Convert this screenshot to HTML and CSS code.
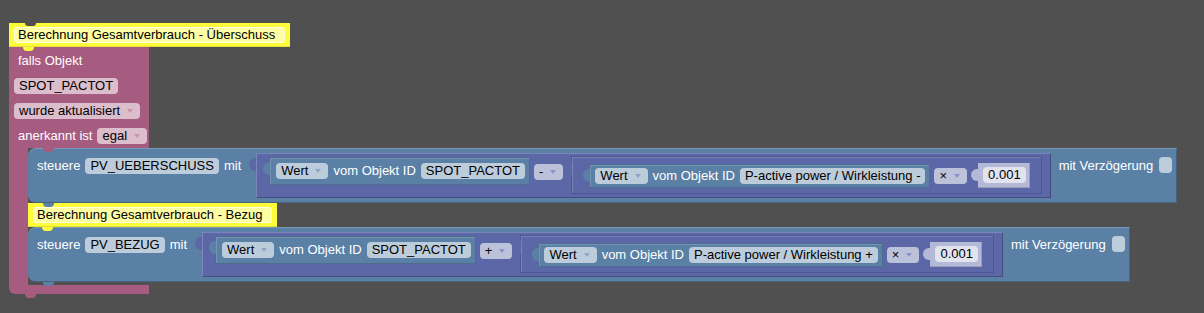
FILE: index.html
```html
<!DOCTYPE html>
<html lang="de">

<head>
    <meta charset="UTF-8">
    <meta name="viewport" content="width=device-width, initial-scale=1.0">
    <title>Skript</title>
    <link rel="stylesheet" href="styles.css">
</head>

<body>
    <div class="workspace">
        <div class="script">
            <div class="comment hat">
                <div class="comment-text">Berechnung Gesamtverbrauch - Überschuss</div>
            </div>

            <div class="event">
                <div class="event-head">
                    <div class="row"><span class="label indent">falls Objekt</span></div>
                    <div class="row"><span class="field">SPOT_PACTOT</span></div>
                    <div class="row"><span class="field dd">wurde aktualisiert<i class="caret"></i></span></div>
                    <div class="row">
                        <span class="label indent">anerkannt ist</span>
                        <span class="field dd">egal<i class="caret"></i></span>
                    </div>
                </div>

                <div class="event-do">
                    <div class="spine"></div>
                    <div class="statements">

                        <div class="control">
                            <span class="label">steuere</span>
                            <span class="field">PV_UEBERSCHUSS</span>
                            <span class="label">mit</span>
                            <div class="op">
                                <div class="getval">
                                    <span class="field dd">Wert<i class="caret"></i></span>
                                    <span class="label">vom Objekt ID</span>
                                    <span class="field">SPOT_PACTOT</span>
                                </div>
                                <span class="field dd sign">-<i class="caret"></i></span>
                                <div class="op inner">
                                    <div class="getval short">
                                        <span class="field dd">Wert<i class="caret"></i></span>
                                        <span class="label">vom Objekt ID</span>
                                        <span class="field">P-active power / Wirkleistung -</span>
                                    </div>
                                    <span class="field dd">×<i class="caret"></i></span>
                                    <div class="number"><span class="field">0.001</span></div>
                                </div>
                            </div>
                            <span class="label delay">mit Verzögerung</span>
                            <span class="check"></span>
                        </div>

                        <div class="comment">
                            <div class="comment-text">Berechnung Gesamtverbrauch - Bezug</div>
                        </div>

                        <div class="control">
                            <span class="label">steuere</span>
                            <span class="field">PV_BEZUG</span>
                            <span class="label">mit</span>
                            <div class="op">
                                <div class="getval">
                                    <span class="field dd">Wert<i class="caret"></i></span>
                                    <span class="label">vom Objekt ID</span>
                                    <span class="field">SPOT_PACTOT</span>
                                </div>
                                <span class="field dd sign">+<i class="caret"></i></span>
                                <div class="op inner">
                                    <div class="getval short">
                                        <span class="field dd">Wert<i class="caret"></i></span>
                                        <span class="label">vom Objekt ID</span>
                                        <span class="field">P-active power / Wirkleistung +</span>
                                    </div>
                                    <span class="field dd">×<i class="caret"></i></span>
                                    <div class="number"><span class="field">0.001</span></div>
                                </div>
                            </div>
                            <span class="label delay">mit Verzögerung</span>
                            <span class="check"></span>
                        </div>

                    </div>
                </div>
                <div class="event-foot"></div>
            </div>
        </div>
    </div>
</body>

</html>
```

FILE: styles.css
```css
body {
    margin: 0;
    padding: 0;
    background-color: #505050;
    font-family: "Liberation Sans", Arial, sans-serif;
    font-size: 13px;
}

.workspace {
    height: 313px;
    box-sizing: border-box;
    padding: 23px 0 0 9px;
    overflow: hidden;
}

.script,
.event,
.statements {
    display: flex;
    flex-direction: column;
    align-items: flex-start;
}

/* yellow comment blocks */
.comment {
    position: relative;
    background-color: #fcfc3a;
    padding: 4px 5px;
    box-shadow: inset 0 -1px 0 rgba(0, 0, 0, 0.1);
}

.comment-text {
    height: 14px;
    line-height: 14px;
    padding: 0 9px 0 3px;
    background-color: #fdfda4;
    border: 1px solid #fffee2;
    border-radius: 3px;
    color: #000;
    white-space: nowrap;
}

/* tabs below statement blocks */
.comment::after,
.control::after,
.statements::before,
.event-foot::after {
    content: "";
    position: absolute;
    top: 100%;
    left: 15px;
    width: 11px;
    height: 4px;
    border-radius: 0 0 5px 5px;
    z-index: 2;
}

.comment::after {
    left: 14px;
    background-color: #fcfc3a;
}

.hat::before {
    content: "";
    position: absolute;
    top: 0;
    left: 16px;
    width: 11px;
    height: 3px;
    border-radius: 0 0 5px 5px;
    background-color: #505050;
}

/* event block */
.event-head {
    width: 140px;
    box-sizing: border-box;
    padding: 1px 0 0 5px;
    background-color: #a65b80;
}

.row {
    height: 25px;
    display: flex;
    align-items: center;
    gap: 5px;
}

.event-do {
    display: flex;
}

.spine {
    width: 19px;
    flex: none;
    background-color: #a65b80;
}

.statements {
    position: relative;
    padding-bottom: 3px;
}

.statements::before {
    top: 0;
    background-color: #a65b80;
}

.event-foot {
    position: relative;
    width: 140px;
    height: 9px;
    background-color: #a65b80;
    border-radius: 0 0 0 6px;
}

.event-foot::after {
    left: 16px;
    background-color: #a65b80;
}

/* labels and fields */
.label {
    height: 16px;
    line-height: 16px;
    color: #fff;
    white-space: nowrap;
}

.indent {
    margin-left: 4px;
}

.field {
    display: inline-flex;
    align-items: center;
    height: 16px;
    line-height: 16px;
    padding: 0 5px;
    border-radius: 4px;
    background-color: rgba(255, 255, 255, 0.6);
    color: #000;
    white-space: nowrap;
}

.dd {
    padding-right: 7px;
}

.caret {
    display: inline-block;
    width: 0;
    height: 0;
    margin-left: 7px;
    border-left: 3px solid transparent;
    border-right: 3px solid transparent;
    border-top: 4px solid #c993ad;
}

.getval .caret {
    border-top-color: #8ea8c4;
}

.sign .caret,
.inner > .dd .caret {
    border-top-color: #8a94c8;
}

/* "steuere" blocks */
.control {
    position: relative;
    display: flex;
    align-items: flex-start;
    gap: 5px;
    padding: 5px 5px 5px 9px;
    background-color: #5b80a6;
    border-radius: 8px 0 0 8px;
    box-shadow: inset 0 1px 0 rgba(255, 255, 255, 0.18), inset -1px -1px 0 rgba(0, 0, 0, 0.22);
}

.control::after {
    background-color: #5b80a6;
}

.control > .label,
.control > .field {
    margin-top: 5px;
}

.control > .delay {
    margin-left: 3px;
}

.check {
    width: 13px;
    height: 16px;
    margin-top: 4px;
    margin-left: 1px;
    border-radius: 4px;
    background-color: #bdccdb;
}

/* value blocks */
.op {
    position: relative;
    display: flex;
    align-items: flex-start;
    gap: 5px;
    margin-left: 10px;
    padding: 4px 10px 5px 14px;
    background-color: #5b67a6;
    box-shadow: inset 1px 1px 0 rgba(255, 255, 255, 0.2), inset -1px -1px 0 rgba(0, 0, 0, 0.25);
}

.op::before,
.getval::before,
.number::before {
    content: "";
    position: absolute;
    left: -7px;
    top: 5px;
    width: 7px;
    height: 13px;
    border-radius: 6px 0 0 6px;
    background-color: #5b67a6;
}

.op.inner {
    align-items: center;
    margin-left: 4px;
    padding: 6px 11px 5px 18px;
    box-shadow: 0 0 0 1px #4c5690, inset 1px 1px 0 rgba(255, 255, 255, 0.18);
}

.sign {
    margin-top: 7px;
}

.getval {
    position: relative;
    display: flex;
    align-items: center;
    gap: 5px;
    margin-top: 1px;
    padding: 5px 4px 5px 6px;
    background-color: #5b80a6;
    box-shadow: 0 0 0 1px #4d6c8e, inset 1px 1px 0 rgba(255, 255, 255, 0.15);
}

.getval::before {
    background-color: #5b80a6;
    top: 4px;
}

.getval.short {
    margin-top: 0;
    padding: 3px 4px 3px 5px;
}

.number {
    position: relative;
    margin-left: 6px;
    padding: 4px 4px 5px 5px;
    background-color: #b5b9d8;
    box-shadow: inset -1px -1px 0 rgba(0, 0, 0, 0.15);
}

.number::before {
    background-color: #b5b9d8;
    top: 6px;
    height: 12px;
}
```
